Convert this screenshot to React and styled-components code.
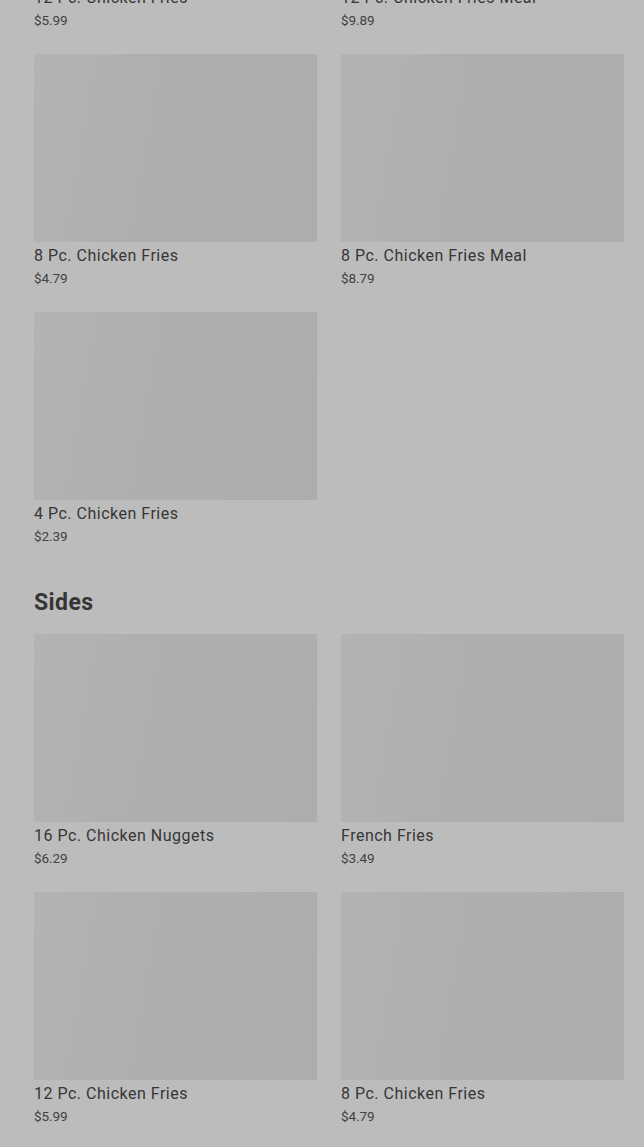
import React from "react";
import styled, { createGlobalStyle } from "styled-components";

const Global = createGlobalStyle`
  html, body { margin: 0; padding: 0; background: #bcbcbc; }
  body { font-family: Roboto, "Noto Sans", sans-serif; overflow: hidden; }
`;

const Page = styled.main`
  padding: 0 20px 40px 34px;
  margin-top: -204px;
  display: flex;
  flex-direction: column;
  gap: 40px;
`;

const Section = styled.section`
  display: flex;
  flex-direction: column;
`;

const Heading = styled.h2`
  margin: 2px 0 17px;
  font-size: 23px;
  line-height: 28px;
  font-weight: 700;
  color: #353535;
  letter-spacing: 0.4px;
`;

const Grid = styled.div`
  display: grid;
  grid-template-columns: 283px 283px;
  column-gap: 24px;
  row-gap: 23px;
`;

const Card = styled.div`
  display: flex;
  flex-direction: column;
`;

const Thumb = styled.div`
  height: 188px;
  background: linear-gradient(100deg, #b3b3b3 0%, #afafaf 40%, #adadad 100%);
`;

const Title = styled.div`
  margin-top: 2px;
  height: 24px;
  line-height: 24px;
  font-size: 16px;
  color: #363636;
  letter-spacing: 0.5px;
`;

const Price = styled.div`
  height: 21px;
  line-height: 20px;
  font-size: 13.5px;
  color: #424242;
  letter-spacing: -0.1px;
`;

const sections = [
  {
    name: null,
    items: [
      ["12 Pc. Chicken Fries", "$5.99"],
      ["12 Pc. Chicken Fries Meal", "$9.89"],
      ["8 Pc. Chicken Fries", "$4.79"],
      ["8 Pc. Chicken Fries Meal", "$8.79"],
      ["4 Pc. Chicken Fries", "$2.39"],
    ],
  },
  {
    name: "Sides",
    items: [
      ["16 Pc. Chicken Nuggets", "$6.29"],
      ["French Fries", "$3.49"],
      ["12 Pc. Chicken Fries", "$5.99"],
      ["8 Pc. Chicken Fries", "$4.79"],
    ],
  },
];

export default function App() {
  return (
    <>
      <Global />
      <Page>
        {sections.map((s, i) => (
          <Section key={i}>
            {s.name && <Heading>{s.name}</Heading>}
            <Grid>
              {s.items.map(([t, p], j) => (
                <Card key={j}>
                  <Thumb />
                  <Title>{t}</Title>
                  <Price>{p}</Price>
                </Card>
              ))}
            </Grid>
          </Section>
        ))}
      </Page>
    </>
  );
}
